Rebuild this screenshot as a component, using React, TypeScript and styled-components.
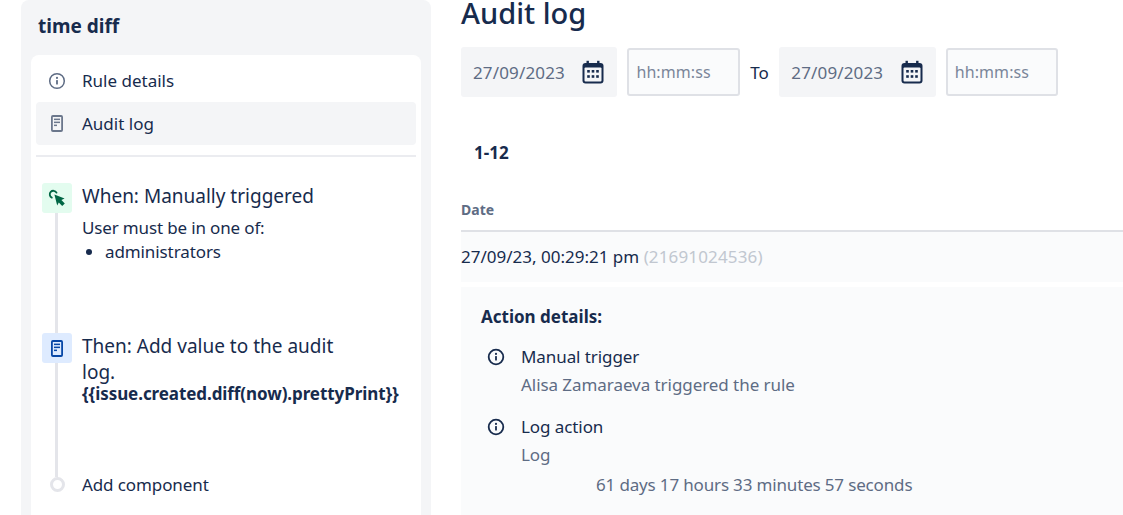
import * as React from 'react';
import styled, { createGlobalStyle } from 'styled-components';

const GlobalStyle = createGlobalStyle`
  html, body {
    margin: 0;
    height: 515px;
    overflow: hidden;
    background: #fff;
  }
  body {
    font-family: "Noto Sans", "Open Sans", sans-serif;
    color: #172b4d;
    font-size: 17px;
  }
`;

const InfoIcon: React.FC<{ size?: number; color: string; weight?: number }> = ({ size = 18, color, weight = 1.8 }) => (
  <svg width={size} height={size} viewBox="0 0 18 18" fill="none">
    <circle cx="9" cy="9" r="7.3" stroke={color} strokeWidth={weight} />
    <rect x="8.1" y="8" width="1.8" height="4.6" rx="0.5" fill={color} />
    <circle cx="9" cy="5.9" r="1.05" fill={color} />
  </svg>
);

const PageIcon: React.FC<{ color: string; fill: string }> = ({ color, fill }) => (
  <svg width="14" height="17" viewBox="0 0 14 17" fill="none">
    <rect x="1.9" y="1" width="10.2" height="15" rx="1" fill={fill} stroke={color} strokeWidth="1.8" />
    <rect x="4" y="3.6" width="6" height="1.5" fill={color} />
    <rect x="4" y="6.6" width="6" height="1.5" fill={color} />
    <rect x="4" y="9.6" width="3" height="1.5" fill={color} />
  </svg>
);

const CursorIcon = () => (
  <svg width="18" height="18" viewBox="0 0 18 18" fill="none">
    <path d="M8.5 3.6 A3.6 3.6 0 1 0 3.8 8.6" stroke="#006644" strokeWidth="1.8" strokeLinecap="round" />
    <path d="M6.4 5.4 L16.6 9.4 L13.4 11 L16.8 14.4 L14.2 17 L10.8 13.6 L9.2 16.4 Z" fill="#006644" />
  </svg>
);

const CalendarIcon = () => (
  <svg width="24" height="24" viewBox="0 0 24 24">
    <rect x="1.5" y="3" width="21" height="20.5" rx="3" fill="#172b4d" />
    <rect x="5.5" y="0.8" width="2.4" height="4" fill="#172b4d" />
    <rect x="16.1" y="0.8" width="2.4" height="4" fill="#172b4d" />
    <rect x="3.5" y="7.5" width="17" height="14" rx="1" fill="#f4f5f7" />
    {[6.2, 10.7, 15.2].map((x) =>
      [10, 15.2].map((y) => <rect key={`${x}-${y}`} x={x} y={y} width="2.6" height="2.6" fill="#172b4d" />),
    )}
  </svg>
);

const App: React.FC = () => (
  <>
    <GlobalStyle />
    <Page>
      <Sidebar>
        <RuleName>time diff</RuleName>
        <SideCard>
          <NavItem>
            <NavIcon><InfoIcon color="#5e6c84" weight={1.5} /></NavIcon>
            Rule details
          </NavItem>
          <NavItem $active>
            <NavIcon><PageIcon color="#6b778c" fill="#f4f5f7" /></NavIcon>
            Audit log
          </NavItem>
          <Divider />
          <Steps>
            <Rail />
            <WhenStep>
              <StepBadge $bg="#e3fcef"><CursorIcon /></StepBadge>
              <StepBody>
                <StepTitle>When: Manually triggered</StepTitle>
                <StepText>User must be in one of:</StepText>
                <StepList>
                  <li>administrators</li>
                </StepList>
              </StepBody>
            </WhenStep>
            <ThenStep>
              <StepBadge $bg="#deebff"><PageIcon color="#0747a6" fill="#deebff" /></StepBadge>
              <StepBody>
                <StepTitle>Then: Add value to the audit log.</StepTitle>
                <StepCode>{'{{issue.created.diff(now).prettyPrint}}'}</StepCode>
              </StepBody>
            </ThenStep>
            <AddStep>
              <AddDotSlot><AddDot /></AddDotSlot>
              Add component
            </AddStep>
          </Steps>
        </SideCard>
      </Sidebar>
      <Main>
        <Heading>Audit log</Heading>
        <Filters>
          <DateField>27/09/2023<CalendarIcon /></DateField>
          <TimeField>hh:mm:ss</TimeField>
          <ToLabel>To</ToLabel>
          <DateField>27/09/2023<CalendarIcon /></DateField>
          <TimeField>hh:mm:ss</TimeField>
        </Filters>
        <Range>1-12</Range>
        <ColumnHead>Date</ColumnHead>
        <LogRow>
          27/09/23, 00:29:21 pm <LogId>(21691024536)</LogId>
        </LogRow>
        <Details>
          <DetailsTitle>Action details:</DetailsTitle>
          <Action>
            <InfoIcon color="#172b4d" />
            <ActionBody>
              <ActionName>Manual trigger</ActionName>
              <ActionText>Alisa Zamaraeva triggered the rule</ActionText>
            </ActionBody>
          </Action>
          <Action>
            <InfoIcon color="#172b4d" />
            <ActionBody>
              <ActionName>Log action</ActionName>
              <ActionText>Log</ActionText>
              <ActionValue>61 days 17 hours 33 minutes 57 seconds</ActionValue>
            </ActionBody>
          </Action>
        </Details>
      </Main>
    </Page>
  </>
);

export default App;

const Page = styled.div`
  display: flex;
  height: 515px;
  overflow: hidden;
  padding-left: 21px;
  gap: 30px;
`;

const Sidebar = styled.aside`
  flex: 0 0 410px;
  box-sizing: border-box;
  background: #f4f5f7;
  border-radius: 8px 8px 0 0;
  padding: 0 10px;
`;

const RuleName = styled.div`
  height: 55px;
  padding: 14px 7px 0;
  box-sizing: border-box;
  font-size: 19px;
  line-height: 24px;
  font-weight: 700;
`;

const SideCard = styled.div`
  background: #fff;
  border-radius: 8px 8px 0 0;
  padding: 4px 5px 0;
  height: 460px;
  box-sizing: border-box;
`;

const NavItem = styled.div<{ $active?: boolean }>`
  display: flex;
  align-items: center;
  height: 43px;
  border-radius: 4px;
  background: ${(p) => (p.$active ? '#f4f5f7' : 'transparent')};
`;

const NavIcon = styled.span`
  display: flex;
  justify-content: center;
  width: 42px;
  margin-right: 4px;
`;

const Divider = styled.div`
  height: 2px;
  margin-top: 10px;
  background: #ebecf0;
`;

const Steps = styled.div`
  position: relative;
  padding: 26px 6px 0;
`;

const Rail = styled.div`
  position: absolute;
  left: 19px;
  top: 50px;
  width: 3px;
  height: 270px;
  background: #e4e5ea;
`;

const WhenStep = styled.div`
  position: relative;
  display: flex;
  gap: 10px;
  height: 150px;
`;

const ThenStep = styled(WhenStep)`
  height: 139px;
`;

const StepBadge = styled.div<{ $bg: string }>`
  flex: 0 0 30px;
  height: 30px;
  display: flex;
  align-items: center;
  justify-content: center;
  border-radius: 3px;
  background: ${(p) => p.$bg};
`;

const StepBody = styled.div`
  width: 300px;
`;

const StepTitle = styled.div`
  font-size: 19px;
  line-height: 26px;
  padding-right: 30px;
`;

const StepText = styled.div`
  margin-top: 7px;
  line-height: 24px;
  letter-spacing: -0.15px;
`;

const StepList = styled.ul`
  margin: 0;
  padding-left: 23px;
  line-height: 24px;
  letter-spacing: -0.1px;
`;

const StepCode = styled.div`
  line-height: 18px;
  font-weight: 700;
  letter-spacing: -0.08px;
  white-space: nowrap;
`;

const AddStep = styled.div`
  position: relative;
  display: flex;
  align-items: center;
  height: 24px;
  letter-spacing: -0.1px;
`;

const AddDotSlot = styled.span`
  display: flex;
  justify-content: center;
  flex: 0 0 30px;
  margin-right: 10px;
`;

const AddDot = styled.span`
  width: 15px;
  height: 15px;
  box-sizing: border-box;
  border: 3px solid #e4e5ea;
  border-radius: 50%;
  background: #fff;
`;

const Main = styled.main`
  flex: 1;
  min-width: 0;
`;

const Heading = styled.h1`
  margin: 0;
  height: 47px;
  font-size: 29px;
  line-height: 26px;
  font-weight: 500;
`;

const Filters = styled.div`
  display: flex;
  align-items: center;
  height: 50px;
`;

const DateField = styled.div`
  display: flex;
  align-items: center;
  justify-content: space-between;
  width: 156.4px;
  height: 50px;
  box-sizing: border-box;
  padding: 0 12px;
  border-radius: 3px;
  background: #f4f5f7;
  color: #5e6c84;
  letter-spacing: 0.15px;
`;

const TimeField = styled.div`
  display: flex;
  align-items: center;
  width: 112.5px;
  height: 48px;
  box-sizing: border-box;
  margin-left: 10px;
  padding: 0 7px;
  border: 2px solid #dfe1e6;
  border-radius: 3px;
  background: #fafbfc;
  color: #7a869a;
  font-size: 16px;
  letter-spacing: 0.1px;
`;

const ToLabel = styled.span`
  width: 39.4px;
  text-align: center;
`;

const Range = styled.div`
  margin: 44px 0 0 13px;
  line-height: 24px;
  font-weight: 700;
`;

const ColumnHead = styled.div`
  margin-top: 36px;
  height: 29px;
  border-bottom: 2px solid #dfe1e6;
  font-size: 14px;
  line-height: 18px;
  font-weight: 700;
  color: #5e6c84;
`;

const LogRow = styled.div`
  height: 50px;
  line-height: 50px;
  background: #fafbfc;
`;

const LogId = styled.span`
  color: #c1c7d0;
  letter-spacing: 0.15px;
`;

const Details = styled.section`
  margin-top: 5px;
  padding: 18px 20px 0;
  height: 228px;
  background: #fafbfc;
`;

const DetailsTitle = styled.div`
  line-height: 24px;
  font-weight: 700;
  margin-bottom: 14px;
`;

const Action = styled.div`
  display: flex;
  gap: 16px;
  margin-bottom: 14px;

  & > svg {
    margin-top: 5px;
    margin-left: 6px;
    flex: none;
  }
`;

const ActionBody = styled.div`
  line-height: 28px;
`;

const ActionName = styled.div`
  letter-spacing: -0.08px;
`;

const ActionText = styled.div`
  color: #5e6c84;
  letter-spacing: -0.06px;
`;

const ActionValue = styled(ActionText)`
  margin-top: 2px;
  padding-left: 75px;
  letter-spacing: -0.16px;
`;
